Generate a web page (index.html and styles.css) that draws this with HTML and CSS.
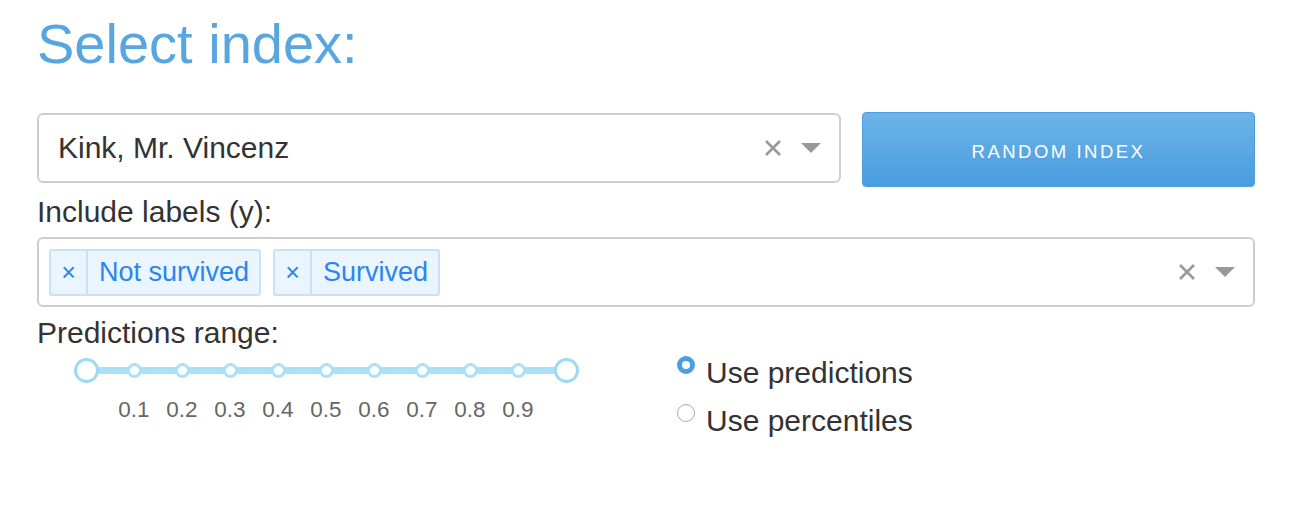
FILE: index.html
```html
<!DOCTYPE html>
<html>
<head>
<meta charset="utf-8">
<link rel="stylesheet" href="styles.css">
</head>
<body>
<div class="page">
  <h1 class="title">Select index:</h1>
  <div class="row-top">
    <div class="select single">
      <span class="value">Kink, Mr. Vincenz</span>
      <span class="controls">
        <svg class="clear" width="18" height="18" viewBox="0 0 18 18"><path d="M2 2 L16 16 M16 2 L2 16" stroke="#999" stroke-width="2.6" fill="none"/></svg>
        <svg class="arrow" width="20" height="10" viewBox="0 0 20 10"><path d="M0 0 L20 0 L10 10 Z" fill="#999"/></svg>
      </span>
    </div>
    <button class="btn">RANDOM INDEX</button>
  </div>
  <div class="label label-include">Include labels (y):</div>
  <div class="select multi">
    <div class="tags">
      <span class="tag"><span class="tag-x">×</span><span class="tag-text">Not survived</span></span>
      <span class="tag"><span class="tag-x">×</span><span class="tag-text">Survived</span></span>
    </div>
    <span class="controls">
      <svg class="clear" width="18" height="18" viewBox="0 0 18 18"><path d="M2 2 L16 16 M16 2 L2 16" stroke="#999" stroke-width="2.6" fill="none"/></svg>
      <svg class="arrow" width="20" height="10" viewBox="0 0 20 10"><path d="M0 0 L20 0 L10 10 Z" fill="#999"/></svg>
    </span>
  </div>
  <div class="label label-range">Predictions range:</div>
  <div class="row-range">
    <div class="slider">
      <div class="slider-track">
        <span class="handle"></span>
        <span class="dot"></span><span class="dot"></span><span class="dot"></span>
        <span class="dot"></span><span class="dot"></span><span class="dot"></span>
        <span class="dot"></span><span class="dot"></span><span class="dot"></span>
        <span class="handle"></span>
      </div>
      <div class="slider-marks">
        <span></span>
        <span>0.1</span><span>0.2</span><span>0.3</span><span>0.4</span><span>0.5</span>
        <span>0.6</span><span>0.7</span><span>0.8</span><span>0.9</span>
        <span></span>
      </div>
    </div>
    <div class="radios">
      <label class="radio"><span class="radio-dot checked"></span>Use predictions</label>
      <label class="radio"><span class="radio-dot"></span>Use percentiles</label>
    </div>
  </div>
</div>
</body>
</html>
```

FILE: styles.css
```css
* { box-sizing: border-box; }
html, body { margin: 0; padding: 0; background: #fff; }
body {
  font-family: "Liberation Sans", Arial, Helvetica, sans-serif;
  color: #333;
  width: 1296px;
  height: 524px;
  overflow: hidden;
}
.page {
  padding-left: 37px;
  width: 1255px;
}
.title {
  margin: 12px 0 0 0;
  font-size: 56px;
  line-height: 64px;
  font-weight: normal;
  color: #58a6e0;
  height: 100px;
}
.row-top {
  display: flex;
  align-items: flex-start;
  gap: 21px;
}
.select {
  border: 2px solid #cfcfcf;
  border-radius: 6px;
  display: flex;
  align-items: center;
  background: #fff;
}
.single {
  width: 804px;
  height: 70px;
  margin-top: 1px;
  padding-left: 19px;
  padding-right: 18px;
}
.value {
  flex: 1;
  font-size: 30px;
  color: #333;
}
.controls {
  display: flex;
  align-items: center;
  gap: 19px;
}
.btn {
  width: 393px;
  height: 75px;
  border: 1px solid #4d9ee0;
  border-radius: 4px;
  background: linear-gradient(#6cb3e8, #499ddf);
  color: #fff;
  font-family: "Liberation Sans", Arial, sans-serif;
  font-size: 18.5px;
  letter-spacing: 2.5px;
  padding: 4px 0 0 0;
}
.label {
  font-size: 30px;
  line-height: 32px;
  color: #333;
}
.label-include { margin-top: 9px; }
.multi {
  margin-top: 9px;
  width: 1218px;
  height: 70px;
  padding: 0 18px 0 10px;
}
.tags {
  flex: 1;
  display: flex;
  gap: 12px;
}
.tag {
  display: flex;
  height: 47px;
  background: #ebf5ff;
  border: 2px solid #c7e1fb;
  border-radius: 3px;
  color: #2a86ee;
  font-size: 27px;
  align-items: stretch;
}
.tag-x {
  width: 37px;
  border-right: 2px solid #c7e1fb;
  display: flex;
  align-items: center;
  justify-content: center;
  font-size: 25px;
}
.tag-text {
  display: flex;
  align-items: center;
  padding: 0 10px 0 11px;
}
.label-range { margin-top: 10px; }
.row-range {
  display: flex;
  align-items: flex-start;
}
.slider {
  margin-left: 25px;
  margin-top: 9px;
  width: 528px;
}
.slider-track {
  display: grid;
  grid-template-columns: repeat(11, 48px);
  height: 24px;
  align-items: center;
  justify-items: center;
  background: linear-gradient(#abe0f9, #abe0f9) no-repeat 24px 50% / 480px 7px;
}
.handle {
  width: 25px;
  height: 25px;
  border: 3px solid #9dd8f7;
  border-radius: 50%;
  background: #fff;
}
.dot {
  width: 15px;
  height: 15px;
  border: 3px solid #abe0f9;
  border-radius: 50%;
  background: #fff;
}
.slider-marks {
  display: grid;
  grid-template-columns: repeat(11, 48px);
  margin-top: 16px;
  font-size: 22.5px;
  line-height: 24px;
  color: #666;
  justify-items: center;
}
.radios {
  margin-left: 87px;
  display: flex;
  flex-direction: column;
}
.radio {
  display: flex;
  align-items: center;
  font-size: 30px;
  line-height: 48px;
  color: #333;
}
.radio-dot {
  width: 18px;
  height: 18px;
  border-radius: 50%;
  border: 1.5px solid #aaa;
  background: #fff;
  margin-right: 11px;
  margin-top: -17px;
}
.radio-dot.checked {
  border: 5.5px solid #4a9fe2;
  background: #fff;
}
```
